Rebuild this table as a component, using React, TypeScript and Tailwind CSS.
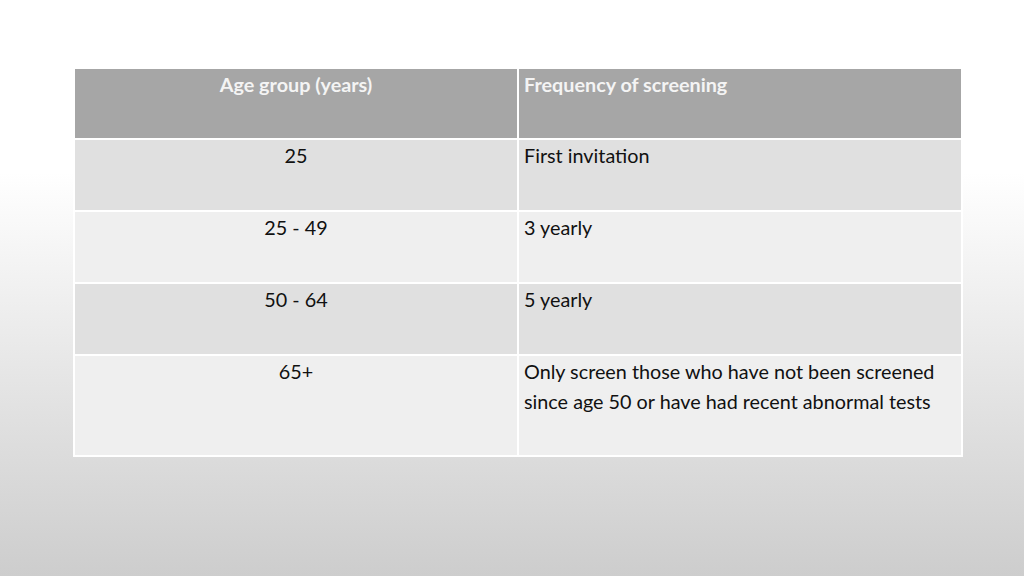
const rows = [
  { age: "25", freq: ["First invitation"], tone: "bg-[#e0e0e0]", h: "h-[72px]" },
  { age: "25 - 49", freq: ["3 yearly"], tone: "bg-[#efefef]", h: "h-[72px]" },
  { age: "50 - 64", freq: ["5 yearly"], tone: "bg-[#e0e0e0]", h: "h-[72px]" },
  {
    age: "65+",
    freq: [
      "Only screen those who have not been screened",
      "since age 50 or have had recent abnormal tests",
    ],
    tone: "bg-[#efefef]",
    h: "h-[101px]",
  },
];

export default function App() {
  return (
    <div
      className="w-[1024px] h-[576px] bg-gradient-to-b from-white from-[30%] to-[#cdcdcd] pt-[67px] pl-[73px]"
      style={{ fontFamily: "Lato, 'Open Sans', sans-serif" }}
    >
      <table className="w-[890px] border-collapse table-fixed text-[19.8px] leading-[30px] text-[#111]">
        <thead>
          <tr className="bg-[#a6a6a6] h-[71px]">
            <th className="w-1/2 border-2 border-white align-top text-center font-bold text-[#f4f4f4]">
              Age group (years)
            </th>
            <th className="w-1/2 border-2 border-white align-top text-left font-bold text-[#f4f4f4] pl-[5px]">
              Frequency of screening
            </th>
          </tr>
        </thead>
        <tbody>
          {rows.map((r) => (
            <tr key={r.age} className={`${r.tone} ${r.h}`}>
              <td className="border-2 border-white align-top text-center">{r.age}</td>
              <td className="border-2 border-white align-top pl-[5px]">
                {r.freq.map((l) => (
                  <div key={l}>{l}</div>
                ))}
              </td>
            </tr>
          ))}
        </tbody>
      </table>
    </div>
  );
}
